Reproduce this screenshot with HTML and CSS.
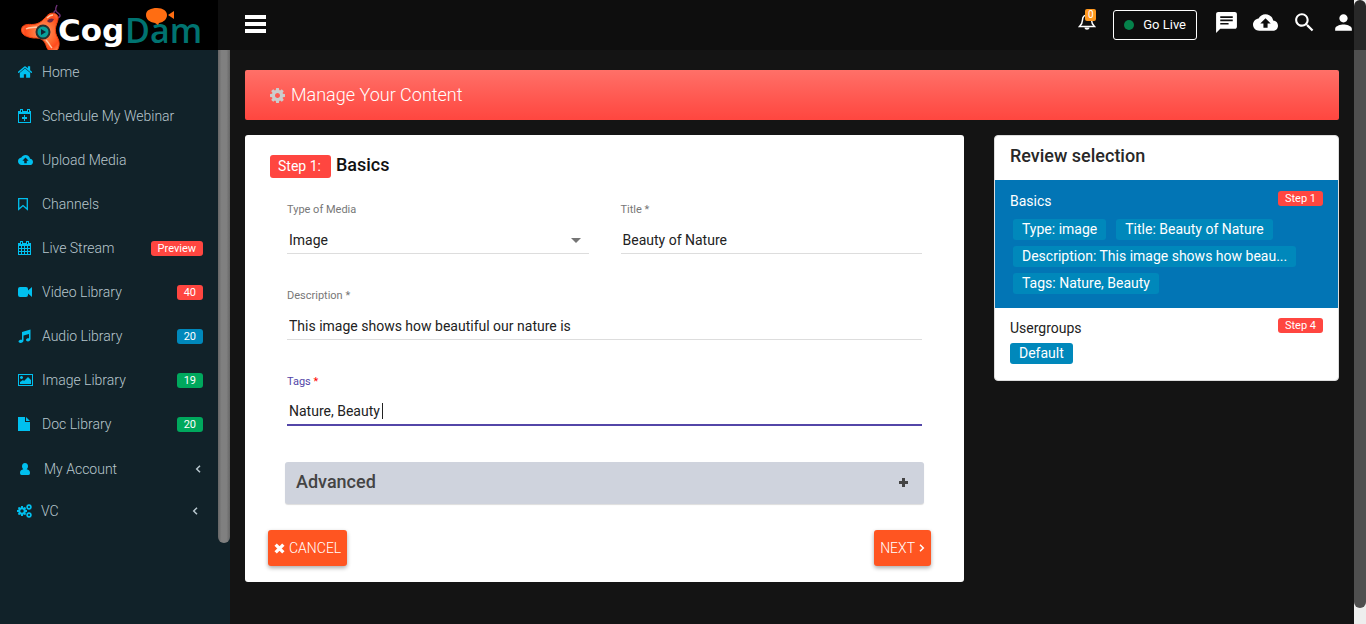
FILE: index.html
```html
<!DOCTYPE html>
<html lang="en">
<head>
<meta charset="utf-8">
<meta name="viewport" content="width=device-width, initial-scale=1">
<title>CogDam - Manage Your Content</title>
<link rel="stylesheet" href="styles.css">
</head>
<body>
<svg class="defs" aria-hidden="true">
  <symbol id="home" viewBox="0 0 1792 1792"><path d="M1472 992v480q0 26-19 45t-45 19h-384v-384h-256v384h-384q-26 0-45-19t-19-45v-480q0-1 .5-3t.5-3l575-474 575 474q1 2 1 6zm223-69l-62 74q-8 9-21 11h-3q-13 0-21-7l-692-577-692 577q-12 8-24 7-13-2-21-11l-62-74q-8-10-7-23.5t11-21.5l719-599q32-26 76-26t76 26l244 204v-195q0-14 9-23t23-9h192q14 0 23 9t9 23v408l219 182q10 8 11 21.5t-7 23.5z"/></symbol>
  <symbol id="gear" viewBox="128 128 1536 1536"><path d="M1152 896q0-106-75-181t-181-75-181 75-75 181 75 181 181 75 181-75 75-181zm512-109v222q0 12-8 23t-20 13l-185 28q-19 54-39 91 35 50 107 138 10 12 10 25t-9 23q-27 37-99 108t-94 71q-12 0-26-9l-138-108q-44 23-91 38-16 136-29 186-7 28-36 28h-222q-14 0-24.500-8.500t-11.500-21.500l-28-184q-49-16-90-37l-141 107q-10 9-25 9-14 0-25-11-126-114-165-168-7-10-7-23 0-12 8-23 15-21 51-66.500t54-70.500q-27-50-41-99l-183-27q-13-2-21-12.500t-8-23.500v-222q0-12 8-23t19-13l186-28q14-46 39-92-40-57-107-138-10-12-10-24 0-10 9-23 26-36 98.500-107.500t94.500-71.500q13 0 26 10l138 107q44-23 91-38 16-136 29-186 7-28 36-28h222q14 0 24.500 8.500t11.500 21.500l28 184q49 16 90 37l142-107q9-9 24-9 13 0 25 10 129 119 165 170 7 8 7 22 0 12-8 23-15 21-51 66.500t-54 70.500q26 50 41 98l183 28q13 2 21 12.500t8 23.500z"/></symbol>
  <symbol id="cloud" viewBox="0 0 24 24"><path d="M19.350 10.040C18.670 6.590 15.640 4 12 4 9.110 4 6.600 5.640 5.350 8.040 2.340 8.360 0 10.910 0 14c0 3.310 2.690 6 6 6h13c2.760 0 5-2.240 5-5 0-2.640-2.050-4.780-4.650-4.960zM14 13v4h-4v-4H7l5-5 5 5h-3z"/></symbol>
  <symbol id="chevron" viewBox="0 0 6 8"><path d="M5 0.700L1.700 4 5 7.300" fill="none" stroke="currentColor" stroke-width="1.500"/></symbol>
</svg>

<div class="window">
  <div class="app">
    <header class="topbar">
      <a class="brand" href="#" aria-label="CogDam">
        <svg class="logo" viewBox="0 0 218 50">
          <defs><radialGradient id="blade" gradientUnits="userSpaceOnUse" cx="43" cy="32" r="24"><stop offset="0" stop-color="#ff9a70"/><stop offset=".5" stop-color="#ff6a30"/><stop offset=".75" stop-color="#ff4a1c"/><stop offset="1" stop-color="#ff8a55"/></radialGradient></defs>
          <path d="M57 5c-2 4-2 6 1 8s3 4-1 5M56 10c-3 2-3 5 0 6" fill="none" stroke="#6b3076" stroke-width="1.500"/>
          <path d="M21.500 30c0-5 5-6 10-5.500 7 0 10-3 14-7 3-4 6-5 9-4 4 1 4 5 3 8-2 5-3 9-1 14 2 4 3 6 2.500 10-.5 3-1.500 4.500-2.500 5.500h-7c-3-2-3-6-5-9-3-4-6-4-11-4-7-1-12-3-12-8z" fill="url(#blade)" stroke="#f2410f" stroke-width="1"/>
          <path d="M26 29c3-2 8-1 11-2M46 40c3 3 4 6 6 8M47 18c2-2 4-3 6-3" fill="none" stroke="#ffc9a4" stroke-width="1.500"/>
          <path d="M47 21c2-3 5-3 7-2-1 3-4 5-7 2z" fill="#6c2743"/>
          <circle cx="43" cy="32" r="6.500" fill="#08a09a" stroke="#28302f" stroke-width="2"/>
          <path d="M41 29l5 3-5 3z" fill="#123"/>
          <text class="logo-cog" x="58" y="41">Cog</text>
          <text class="logo-dam" x="125" y="43">Dam</text>
          <path d="M146 15c0-5 5-7 11-7s10 3 10 7-3 7-8 8l-1 2-3-2c-6-1-9-4-9-8zM168 15l6-4v8z" fill="#ff6d12"/>
        </svg>
      </a>
      <button class="icon-btn menu-btn" aria-label="Toggle menu"><svg class="burger" viewBox="0 0 21 18"><path d="M0 0h21v4H0zM0 7h21v4H0zM0 14h21v4H0z"/></svg></button>
      <div class="tools">
        <button class="icon-btn bell" aria-label="Notifications">
          <svg class="bell-icon" viewBox="0 0 18 20"><path d="M1.500 15.500c2-2 3-3 3-6.500 0-3 2-5 4.500-5s4.500 2 4.500 5c0 3.500 1 4.500 3 6.500z" fill="none" stroke="currentColor" stroke-width="1.500"/><path d="M8 2h2v2H8zM6.500 16.500h5c0 3-5 3-5 0z"/></svg>
          <span class="count">0</span>
        </button>
        <button class="live-btn"><span class="dot"></span>Go Live</button>
        <div class="quick">
          <button class="icon-btn" aria-label="Messages"><svg class="tool-icon" viewBox="0 0 24 24"><path d="M20 2H4c-1.100 0-2 .9-2 2v18l4-4h14c1.100 0 2-.9 2-2V4c0-1.100-.9-2-2-2zM6 6h12v1.600H6zm0 3.200h12v1.600H6zM14 14H6v-1.600h8z"/></svg></button>
          <button class="icon-btn" aria-label="Upload"><svg class="tool-icon"><use href="#cloud"/></svg></button>
          <button class="icon-btn" aria-label="Search"><svg class="tool-icon" viewBox="0 0 24 24"><path d="M15.500 14h-.79l-.28-.27C15.410 12.590 16 11.110 16 9.500 16 5.910 13.090 3 9.500 3S3 5.910 3 9.500 5.910 16 9.500 16c1.610 0 3.090-.59 4.230-1.570l.27.28v.79l5 4.990L20.490 19l-4.990-5zm-6 0C7.010 14 5 11.990 5 9.500S7.010 5 9.500 5 14 7.010 14 9.500 11.990 14 9.500 14z"/></svg></button>
          <button class="icon-btn" aria-label="Profile"><svg class="tool-icon" viewBox="0 0 24 24"><path d="M12 12c2.210 0 4-1.790 4-4s-1.790-4-4-4-4 1.790-4 4 1.790 4 4 4zm0 2c-2.670 0-8 1.340-8 4v2h16v-2c0-2.660-5.330-4-8-4z"/></svg></button>
        </div>
      </div>
    </header>

    <div class="body">
      <aside class="sidebar">
        <nav class="menu">
          <a class="item" href="#"><svg class="glyph" viewBox="0 0 14 14"><use href="#home" x="-1" y="-1" width="16" height="16"/></svg><span class="name">Home</span></a>
          <a class="item" href="#"><svg class="glyph" viewBox="0 0 14 14"><path fill-rule="evenodd" d="M0 2h2V0h3v2h4V0h3v2h1v12H0zM1 5v8h11V5zM3 1v2h1V1zM10 1v2h1V1zM6 6h1v2h2v2H7v2H6v-2H4V8h2z"/></svg><span class="name">Schedule My Webinar</span></a>
          <a class="item" href="#"><svg class="glyph wide" viewBox="0 4 24 16"><use href="#cloud" width="24" height="24"/></svg><span class="name">Upload Media</span></a>
          <a class="item" href="#"><svg class="glyph" viewBox="0 0 14 14"><path d="M.7 1.700h8.600v10.600L5 8.500.7 12.300z" fill="none" stroke="currentColor" stroke-width="1.300"/></svg><span class="name">Channels</span></a>
          <a class="item" href="#"><svg class="glyph" viewBox="0 0 14 14"><path fill-rule="evenodd" d="M0 2h2V0h3v2h3V0h3v2h2v12H0zM3 1v2h1V1zM9 1v2h1V1zM1 5v2h2V5zM4 5v2h2V5zM7 5v2h2V5zM10 5v2h2V5zM1 8v2h2V8zM4 8v2h2V8zM7 8v2h2V8zM10 8v2h2V8zM1 11v2h2v-2zM4 11v2h2v-2zM7 11v2h2v-2zM10 11v2h2v-2z"/></svg><span class="name">Live Stream</span><span class="tag red">Preview</span></a>
          <a class="item" href="#"><svg class="glyph" viewBox="0 0 14 14"><path d="M2 2h6q2 0 2 2v1.500L14 2v10l-4-3.500V10q0 2-2 2H2q-2 0-2-2V4q0-2 2-2z"/></svg><span class="name">Video Library</span><span class="tag red">40</span></a>
          <a class="item" href="#"><svg class="glyph" viewBox="0 0 14 14"><path d="M4 3l8.500-2.500v9.500c0 3-4.500 3-4.500 1 0-1.500 1.500-2 3-1.800V5L5.500 6.500v5c0 3-5 3-5 1 0-1.500 2-2 3.500-1.800z"/></svg><span class="name">Audio Library</span><span class="tag blue">20</span></a>
          <a class="item" href="#"><svg class="glyph wide" viewBox="0 0 15 12"><path fill-rule="evenodd" d="M0 0h15v12H0zM1 1v10h13V1zM2 10V8l3-2 1 1 4-4 3 3v4zM3.500 2a1.500 1.500 0 1 0 .01 0z"/></svg><span class="name">Image Library</span><span class="tag green">19</span></a>
          <a class="item" href="#"><svg class="glyph" viewBox="0 0 14 14"><path d="M0 0h7v5h5v9H0zM8 0l4 4H8z"/></svg><span class="name">Doc Library</span><span class="tag green">20</span></a>
          <div class="groups">
            <a class="item sub" href="#"><svg class="glyph" viewBox="0 0 14 14"><path d="M7 1c2 0 3 1.500 3 3.200S9 7 8.600 7.300C11 7.500 12 9 12 11q0 2-1.500 2h-7Q2 13 2 11c0-2 1-3.500 3.400-3.700C5 7 4 6 4 4.200S5 1 7 1z"/></svg><span class="name">My Account</span><svg class="chev"><use href="#chevron"/></svg></a>
            <a class="item sub vc" href="#"><svg class="glyph wide" viewBox="0 0 15 14"><use href="#gear" y="2" width="10" height="10"/><use href="#gear" x="9" width="6" height="6"/><use href="#gear" x="9" y="8" width="6" height="6"/></svg><span class="name">VC</span><svg class="chev"><use href="#chevron"/></svg></a>
          </div>
        </nav>
        <div class="side-thumb"></div>
      </aside>

      <main class="content">
        <h1 class="banner"><svg class="banner-icon"><use href="#gear"/></svg>Manage Your Content</h1>
        <div class="columns">
          <form class="card">
            <h2 class="step-title"><span class="step">Step 1:</span>Basics</h2>
            <div class="fields">
              <div class="field">
                <label for="type">Type of Media</label>
                <div class="select-box"><select id="type"><option>Image</option><option>Video</option></select><svg class="arrow" viewBox="0 0 10 5"><path d="M0 0h10L5 5z"/></svg></div>
              </div>
              <div class="field"><label for="title">Title *</label><input id="title" type="text" value="Beauty of Nature"></div>
              <div class="field full"><label for="desc">Description *</label><input id="desc" type="text" value="This image shows how beautiful our nature is"></div>
              <div class="field full active"><label for="tags">Tags <span class="star">*</span></label><input id="tags" type="text" value="Nature, Beauty"><span class="caret"></span></div>
            </div>
            <button class="advanced" type="button">Advanced<svg class="plus" viewBox="0 0 9 9"><path d="M3 0h3v3h3v3H6v3H3V6H0V3h3z"/></svg></button>
            <div class="actions">
              <button class="action" type="button"><svg class="cross" viewBox="0 0 10 10"><path d="M1.500 1.500l7 7M8.500 1.500l-7 7" stroke="currentColor" stroke-width="3"/></svg>CANCEL</button>
              <button class="action" type="button">NEXT<svg class="next" viewBox="0 0 6 8"><path d="M1 .7L4.300 4 1 7.300" fill="none" stroke="currentColor" stroke-width="1.500"/></svg></button>
            </div>
          </form>

          <section class="review">
            <h2 class="review-title">Review selection</h2>
            <div class="group current">
              <div class="group-head"><span>Basics</span><span class="tag red">Step 1</span></div>
              <div class="chips">
                <span class="chip">Type: image</span><span class="chip">Title: Beauty of Nature</span><span class="chip">Description: This image shows how beau...</span><span class="chip">Tags: Nature, Beauty</span>
              </div>
            </div>
            <div class="group">
              <div class="group-head"><span>Usergroups</span><span class="tag red">Step 4</span></div>
              <span class="chip">Default</span>
            </div>
          </section>
        </div>
      </main>
    </div>
  </div>
  <div class="page-scroll"><div class="page-thumb"></div></div>
</div>
</body>
</html>
```
FILE: styles.css
```css
* { box-sizing: border-box; }
body { margin: 0; background: #141414; font: 14px/20px Roboto, "Liberation Sans", sans-serif; color: #222; }
svg { display: block; flex: none; fill: currentColor; }
.defs { position: absolute; width: 0; height: 0; }
button { font: inherit; cursor: pointer; }
h1, h2 { margin: 0; }
a { color: inherit; text-decoration: none; }

.window { display: flex; min-height: 100vh; }
.app { flex: 1; min-width: 0; display: flex; flex-direction: column; }

.topbar { display: flex; height: 50px; background: #0e0e0e; color: #fff; }
.brand { background: #000; }
.logo { width: 218px; height: 50px; }
.logo-cog { font: bold 31px "DejaVu Sans", sans-serif; fill: #fff; }
.logo-dam { font: 600 34px "Open Sans", sans-serif; fill: #007370; }
.icon-btn { display: flex; padding: 0; border: 0; background: none; color: #fff; }
.menu-btn { align-items: center; margin: 0 0 2px 27px; }
.burger { width: 21px; height: 18px; }
.tools { flex: 1; display: flex; justify-content: flex-end; margin-right: -2px; }
.bell { position: relative; align-self: flex-start; margin: 11px 17px 0 0; }
.bell-icon { width: 18px; height: 20px; }
.count { position: absolute; left: 7px; top: -2px; width: 11px; height: 12px; border-radius: 2px; background: #ff981f; font-size: 10px; line-height: 12px; }
.live-btn { display: flex; align-items: center; align-self: flex-start; height: 30px; margin: 10px 17px 0 0; padding: 0 10px; border: 1px solid #fff; border-radius: 3px; background: none; color: #fff; font-size: 13px; }
.dot { width: 10px; height: 10px; margin-right: 9px; border-radius: 50%; background: #05824b; }
.quick { display: flex; gap: 14px; align-self: flex-start; margin-top: 10px; }
.tool-icon { width: 25px; height: 25px; }

.body { flex: 1; display: flex; }
.sidebar { display: flex; width: 230px; background: #112229; color: #b8c7ce; }
.menu { flex: 1; }
.item { display: flex; align-items: center; height: 44px; padding: 0 15px 0 18px; font-weight: 300; }
.glyph { width: 14px; height: 14px; margin-right: 10px; color: #00c0ef; }
.wide { width: 15px; margin-right: 9px; }
.name { flex: 1; }
.groups { padding-top: 2px; }
.sub { height: 42px; padding-right: 17px; }
.sub .glyph { margin-right: 12px; }
.vc { padding: 0 20px 0 17px; }
.vc .wide { margin-right: 9px; }
.chev { width: 6px; height: 8px; }
.side-thumb { width: 12px; height: 493px; border-radius: 0 0 6px 6px; background: linear-gradient(90deg, #666, #808080 30%, #808080 70%, #666); }
.tag { padding: 0 7px; border-radius: 3px; color: #fff; font-size: 11px; font-weight: 400; line-height: 15px; }
.red { background: #ff4640; }
.blue { background: #0088bb; }
.green { background: #00a85d; }

.content { flex: 1; min-width: 0; padding: 20px 15px; }
.banner { display: flex; align-items: center; height: 50px; padding: 0 25px; border-radius: 2px; background: linear-gradient(#ff7068, #ff463f); color: #fff; font-size: 18px; font-weight: 300; }
.banner-icon { width: 15px; height: 15px; margin-right: 6px; color: #ccc; }
.columns { display: grid; grid-template-columns: minmax(0, 719fr) minmax(0, 345fr); gap: 30px; align-items: start; margin-top: 15px; }
.card { padding: 20px 25px 16px; border-radius: 3px; background: #fff; }
.step-title { display: flex; align-items: flex-start; color: #111; font-size: 18px; font-weight: 500; line-height: 20px; }
.step { margin-right: 5px; padding: 0 10px 0 8px; border-radius: 3px; background: #ff4640; color: #fff; font-size: 14px; font-weight: 400; line-height: 23px; }
.fields { display: grid; grid-template-columns: 1fr 1fr; gap: 32px; padding: 22px 17px 0; }
.full { grid-column: 1 / -1; }
.field { display: flex; flex-direction: column; height: 54px; padding-top: 2px; }
.field label { color: #777; font-size: 11px; line-height: 16px; }
.field input, .field select { width: 100%; height: 28px; margin-top: auto; padding: 0 2px; border: 0; border-bottom: 1px solid #ddd; border-radius: 0; outline: 0; background: none; color: #222; font: inherit; appearance: none; }
.select-box { display: grid; align-items: center; margin-top: auto; }
.select-box > * { grid-area: 1 / 1; }
.arrow { width: 10px; height: 5px; margin-right: 8px; justify-self: end; color: #757575; pointer-events: none; }
.field.active { position: relative; }
.field.active label { color: #5346a8; }
.field.active .star { color: #f00; }
.field.active input { border-bottom: 2px solid #5346a8; }
.caret { position: absolute; left: 95px; bottom: 7px; width: 1px; height: 16px; background: #222; }
.advanced { display: flex; align-items: center; justify-content: space-between; width: calc(100% - 30px); height: 42px; margin: 36px 15px 0; padding: 0 16px 2px 11px; border: 0; border-radius: 3px; background: #cfd3dd; box-shadow: 0 1px 1px #ddd; color: #444; font-size: 18px; font-weight: 500; }
.plus { width: 9px; height: 9px; }
.actions { display: flex; justify-content: space-between; margin: 26px 8px 0 -2px; }
.action { display: flex; align-items: center; gap: 4px; height: 36px; padding: 0 6px; border: 0; border-radius: 3px; background: #ff5521; box-shadow: 0 2px 4px #0005; color: #fff; font-weight: 300; }
.cross { width: 11px; height: 11px; }
.next { width: 6px; height: 8px; }

.review { border: 1px solid #ddd; border-radius: 4px; background: #fff; overflow: hidden; }
.review-title { padding: 10px 15px 14px; color: #282828; font-size: 18px; font-weight: 500; line-height: 20px; }
.group { padding: 10px 15px 16px; }
.group .group-head { padding-bottom: 5px; }
.current { padding: 11px 15px 14px; background: #0275b5; color: #fff; }
.group-head { display: flex; justify-content: space-between; align-items: flex-start; }
.chips { display: flex; flex-wrap: wrap; gap: 6px 10px; padding: 3px 3px 0; }
.chip { display: inline-block; padding: 0 9px; border-radius: 3px; background: #0088bb; color: #fff; line-height: 21px; }

.page-scroll { width: 12px; background: #eee; }
.page-thumb { height: 608px; border-radius: 6px; background: linear-gradient(#282828 50px, #4f4f4f 50px); }
```
